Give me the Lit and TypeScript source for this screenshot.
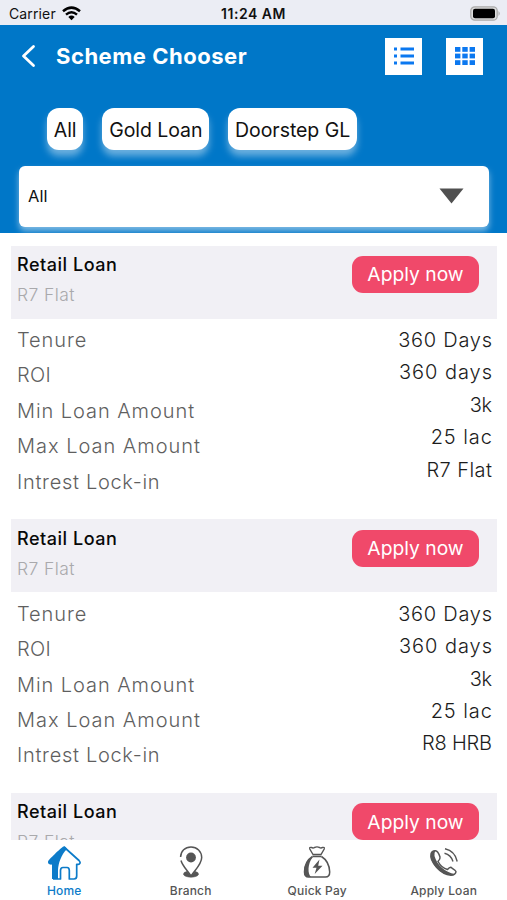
import { LitElement, html, css, svg } from "lit";
import { customElement, property } from "lit/decorators.js";
import { styleMap } from "lit/directives/style-map.js";

interface Entry {
  text: string;
  tracking: number;
}

interface Scheme {
  name: string;
  code: string;
  values: Entry[];
}

const LABELS: Entry[] = [
  { text: "Tenure", tracking: 0.9 },
  { text: "ROI", tracking: 0.3 },
  { text: "Min Loan Amount", tracking: 0.93 },
  { text: "Max Loan Amount", tracking: 0.98 },
  { text: "Intrest Lock-in", tracking: 0.7 },
];

const TERMS: Entry[] = [
  { text: "360 Days", tracking: 0.75 },
  { text: "360 days", tracking: 0.95 },
  { text: "3k", tracking: -0.5 },
  { text: "25 lac", tracking: 0.95 },
];

const R7: Entry = { text: "R7 Flat", tracking: 0.45 };
const R8: Entry = { text: "R8 HRB", tracking: -0.2 };

const SCHEMES: Scheme[] = [
  { name: "Retail Loan", code: "R7 Flat", values: [...TERMS, R7] },
  { name: "Retail Loan", code: "R7 Flat", values: [...TERMS, R8] },
  { name: "Retail Loan", code: "R7 Flat", values: [...TERMS, R7] },
];

const tracked = (e: Entry) =>
  styleMap({ letterSpacing: `${e.tracking}px`, marginRight: `${-e.tracking}px` });

const homeIcon = svg`
  <path d="M17 1.200 C15.500 1.200 2.500 14 1.300 15.800 C.3 18.300 2 20 5 19.600 V34 H11 V25 C11.500 18 14 10 20 4 C18.700 2.200 18 1.200 17 1.200Z" fill="currentColor"/>
  <path d="M17 2 L32 15.500 C34.300 18 32.500 20 29.700 19.300 V31 Q29.700 34 27 34 H22.300 V25.500 Q22.300 22.500 20 22.500 H16 Q13.500 22.500 13.500 25.500 V34 H6" fill="none" stroke="currentColor" stroke-width="1.700" stroke-linejoin="round"/>
`;
const branchIcon = svg`
  <path d="M6.600 12 C6.800 6 11 2 17 2 C23 2 27.700 6.500 27.700 12.500 C27.700 19 21.500 24.500 17 31 C13 25 8.500 21 7 15.500" fill="none" stroke="currentColor" stroke-width="1.500"/>
  <circle cx="17" cy="12.500" r="4.900" fill="currentColor"/>
  <path d="M13 26.500 Q9.300 27 9.500 29.500 C11 33 23 33 24.500 29.500 Q24.700 27 21 26.500 L17 31Z" fill="currentColor" stroke="currentColor" stroke-width=".6"/>
`;
const payIcon = svg`
  <path d="M13 9.500 L9.800 4 Q9.300 2 11.300 2.400 Q13 3.600 14.500 2.500 Q17 1.300 19.500 2.500 Q21 3.600 22.700 2.400 Q24.700 2 24.200 4 L21 9.500Z M12.500 11.500 H21.500" fill="none" stroke="currentColor" stroke-width="1.400"/>
  <path d="M12.500 11.500 C7 15 4.500 20 4.500 27 Q4.500 32 8.500 32 H25.500 Q29.700 32 29.700 27 C29.500 20 27 15 21.500 11.500" fill="none" stroke="currentColor" stroke-width="1.500"/>
  <path d="M12 12 C6 16 4 21 4.500 28 Q4.700 32 9 32 H11 C7.500 29 7.500 19 12.500 12.500Z M19.500 14.500 L12.500 22.700 H16.500 L14.700 29 L22.500 20.700 H18.200Z" fill="currentColor"/>
`;
const loanIcon = svg`
  <path d="M8.500 5.800 Q5 5.500 4 9 C2.500 16 13 29.500 24 30.200 Q28.500 30.200 29 26.700 Q29 25.700 24 22.300 Q22.500 22 20.500 24.500 Q14.500 23 11 16.500 Q13.500 14 13 12 Q11 6 8.500 5.800Z" fill="none" stroke="currentColor" stroke-width="1.500"/>
  <path d="M8.500 5.800 Q4 6 3.800 11 C5 20 13 29.500 24 30.200 Q27 30.200 28 29 C18 27.500 10 20 7.500 11 Q7 8 8.500 5.800Z" fill="currentColor"/>
  <path d="M18 3.800 Q28 6 30.200 16.500 M17.500 8.300 Q24 10 26 16.500" fill="none" stroke="currentColor" stroke-width="1.400"/>
`;

@customElement("scheme-card")
class SchemeCard extends LitElement {
  @property({ attribute: false }) scheme!: Scheme;

  static styles = css`
    :host { display: block; height: 273.800px; }
    .head {
      display: flex; justify-content: space-between; align-items: flex-start;
      height: 73px; box-sizing: border-box; padding: 10.300px 18px 0 6px;
      background: #f1f0f5;
    }
    .name { font-size: 18px; line-height: 18px; font-weight: 500; color: #080808; letter-spacing: .52px; }
    .code { margin-top: 12px; font-size: 17.500px; line-height: 18px; font-weight: 300; color: #a9a9ac; letter-spacing: .4px; }
    .apply {
      width: 127px; height: 37px; border: 0; padding: 0; border-radius: 11px;
      background: #f0496a; color: #fff; font: 400 19.300px "Inter", sans-serif;
    }
    .body { display: flex; justify-content: space-between; padding: 3.500px 5px 0 6px; }
    .label { height: 35.400px; line-height: 36px; font-size: 20px; font-weight: 300; color: #5f5f5f; }
    .value { height: 32.400px; line-height: 37px; font-size: 20px; font-weight: 300; color: #1c1c1c; text-align: right; white-space: nowrap; }
  `;

  render() {
    const s = this.scheme;
    return html`
      <div class="head">
        <div><div class="name">${s.name}</div><div class="code">${s.code}</div></div>
        <button class="apply">Apply now</button>
      </div>
      <div class="body">
        <div>${LABELS.map((l) => html`<div class="label" style=${tracked(l)}>${l.text}</div>`)}</div>
        <div>${s.values.map((v) => html`<div class="value" style=${tracked(v)}>${v.text}</div>`)}</div>
      </div>`;
  }
}

@customElement("app-root")
class AppRoot extends LitElement {
  static styles = css`
    :host { display: flex; flex-direction: column; height: 900px; overflow: hidden; background: #fff; font-family: "Inter", sans-serif; }
    .status {
      display: grid; grid-template-columns: 1fr auto 1fr; align-items: center; flex: none;
      height: 25px; box-sizing: border-box; padding: 2px 6px 0 9px; background: #ebedf4; color: #111;
      font-size: 14px;
    }
    .carrier { display: flex; align-items: center; gap: 6px; letter-spacing: .13px; }
    .time { font-weight: 600; font-size: 14px; letter-spacing: .5px; margin-right: 3px; }
    .battery { justify-self: end; }
    .top { flex: none; height: 208px; background: #0077c8; overflow: hidden; }
    .bar { display: flex; align-items: center; height: 62px; padding: 0 24px 0 20px; color: #fff; }
    .title { flex: 1; margin: 0 0 0 19px; font-size: 22px; font-weight: 700; letter-spacing: .52px; }
    .view { display: grid; place-items: center; width: 37px; height: 37px; margin-left: 24px; background: #fff; }
    .chips { display: flex; gap: 19px; padding: 21px 0 0 47px; }
    .chip {
      height: 42px; box-sizing: border-box; padding: 0 6.800px; border-radius: 12px; background: #fff;
      font-size: 19.500px; line-height: 44px; letter-spacing: -.05px; color: #111; box-shadow: 0 6px 7px rgba(255,255,255,.42);
    }
    .select {
      display: flex; justify-content: space-between; align-items: center; margin: 16px 18px 0 19px;
      height: 61px; box-sizing: border-box; padding: 0 25px 2px 9px; border-radius: 6px; background: #fff;
      font-size: 16.500px; color: #111; box-shadow: 0 4px 6px rgba(255,255,255,.5);
    }
    .list { flex: 1; min-height: 0; overflow: hidden; padding: 12.500px 10px 0 11px; }
    .tabs { display: grid; grid-template-columns: repeat(4, 1fr); flex: none; height: 60px; box-sizing: border-box; padding-left: 1px; background: #fff; }
    .tab { display: flex; flex-direction: column; align-items: center; padding-top: 5px; color: #555; font-size: 12px; font-weight: 500; line-height: 16px; letter-spacing: .2px; }
    .tab svg { margin-bottom: 3px; }
    .active { color: #0c7bc9; }
    svg { display: block; }
  `;

  render() {
    const tabs = [
      { text: "Home", icon: homeIcon },
      { text: "Branch", icon: branchIcon },
      { text: "Quick Pay", icon: payIcon },
      { text: "Apply Loan", icon: loanIcon },
    ];
    const steps = [0, 1, 2];
    return html`
      <div class="status">
        <div class="carrier"><span>Carrier</span>
          <svg width="19" height="15" viewBox="0 0 19 15" fill="none" stroke="#000" stroke-width="2.500">
            <path d="M1 5.200 Q9.500 -2 18 5.200 M4 8.600 Q9.500 4 15 8.600"/><path d="M6.300 11 Q9.500 8.200 12.700 11 L9.500 14.300Z" fill="#000" stroke="none"/>
          </svg>
        </div>
        <span class="time">11:24 AM</span>
        <svg class="battery" width="31" height="15" viewBox="0 0 31 15">
          <rect x=".8" y=".8" width="26.400" height="13.400" rx="4" fill="#ddd" stroke="#aaa" stroke-width="1.300"/>
          <rect x="3" y="2.700" width="22" height="9.600" rx="2" fill="#000"/><path d="M28.500 5 Q31 7.500 28.500 10Z" fill="#aaa"/>
        </svg>
      </div>
      <div class="top">
        <div class="bar">
          <svg width="17" height="24" viewBox="0 0 17 24"><path d="M13.500 2.500 L3.500 12 L13.500 21.500" fill="none" stroke="#fff" stroke-width="2.800" stroke-linecap="round" stroke-linejoin="round"/></svg>
          <h1 class="title">Scheme Chooser</h1>
          <div class="view"><svg width="20" height="18" viewBox="0 0 20 18" fill="#0b78f0">
            ${steps.map((i) => svg`<rect y=${0.5 + i * 7} width="3" height="3"/><rect x="6.500" y=${0.5 + i * 7} width="13.500" height="3"/>`)}
          </svg></div>
          <div class="view"><svg width="20" height="18" viewBox="0 0 20 18" fill="#0b78f0">
            ${steps.map((i) => steps.map((j) => svg`<rect x=${j * 7.3} y=${i * 6.6} width="5.400" height="4.800"/>`))}
          </svg></div>
        </div>
        <div class="chips"><div class="chip">All</div><div class="chip">Gold Loan</div><div class="chip">Doorstep GL</div></div>
        <div class="select"><span>All</span><svg width="25" height="16" viewBox="0 0 25 16"><path d="M.5 .5 H24.500 L12.500 15.500Z" fill="#505050"/></svg></div>
      </div>
      <div class="list">${SCHEMES.map((s) => html`<scheme-card .scheme=${s}></scheme-card>`)}</div>
      <div class="tabs">
        ${tabs.map((t, i) => html`<div class="tab ${i === 0 ? "active" : ""}">
          <svg width="34" height="35" viewBox="0 0 34 35">${t.icon}</svg><span>${t.text}</span></div>`)}
      </div>`;
  }
}
